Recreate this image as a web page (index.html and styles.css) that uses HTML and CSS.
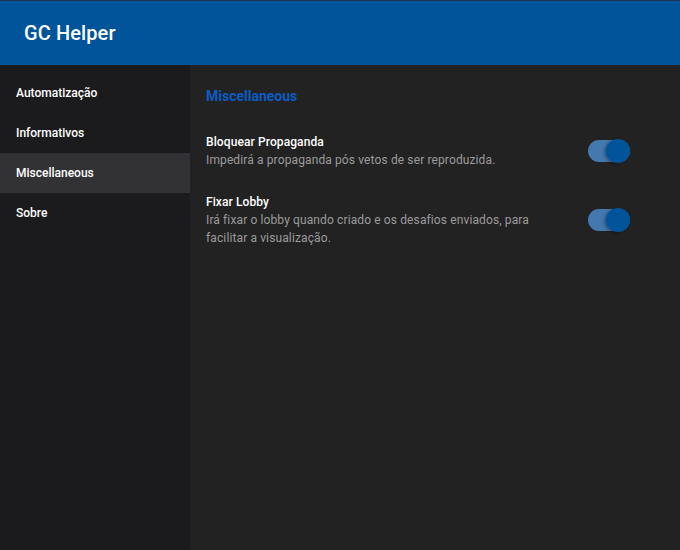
FILE: index.html
```html
<!DOCTYPE html>
<html lang="pt">
<head>
<meta charset="utf-8">
<title>GC Helper</title>
<link rel="stylesheet" href="styles.css">
</head>
<body>
<div class="app">
  <header class="topbar"><h1 class="title">GC Helper</h1></header>
  <div class="main">
    <nav class="sidebar">
      <div class="nav-item">Automatização</div>
      <div class="nav-item">Informativos</div>
      <div class="nav-item active">Miscellaneous</div>
      <div class="nav-item">Sobre</div>
    </nav>
    <section class="content">
      <h2 class="heading">Miscellaneous</h2>
      <div class="setting">
        <div class="text">
          <div class="name">Bloquear Propaganda</div>
          <div class="desc">Impedirá a propaganda pós vetos de ser reproduzida.</div>
        </div>
        <div class="toggle"><span class="thumb"></span></div>
      </div>
      <div class="setting">
        <div class="text">
          <div class="name">Fixar Lobby</div>
          <div class="desc">Irá fixar o lobby quando criado e os desafios enviados, para facilitar a visualização.</div>
        </div>
        <div class="toggle"><span class="thumb"></span></div>
      </div>
    </section>
  </div>
</div>
</body>
</html>
```
FILE: styles.css
```css
* { box-sizing: border-box; }
html, body { margin: 0; padding: 0; height: 100%; }
body { font-family: Roboto, "Noto Sans", sans-serif; background: #222222; color: #fff; }
.app { display: flex; flex-direction: column; height: 550px; }
.topbar {
  height: 65px; background: #00549a; border-top: 1px solid #1f3550;
  display: flex; align-items: center; padding-left: 24px; flex: none;
}
.title { margin: 0; font-size: 20px; font-weight: 500; color: #fff; letter-spacing: 0.1px; }
.main { flex: 1; display: flex; min-height: 0; }
.sidebar { width: 190px; background: #1b1b1d; padding-top: 8px; flex: none; }
.nav-item { height: 40px; display: flex; align-items: center; padding-left: 16px; font-size: 12px; font-weight: 500; color: #fff; }
.nav-item.active { background: #323234; }
.content { flex: 1; background: #222222; padding: 22px 50px 0 16px; }
.heading { margin: 0 0 28px; font-size: 14px; font-weight: 700; color: #0a5cc4; line-height: 18px; }
.setting { display: flex; align-items: center; justify-content: space-between; margin-bottom: 24px; }
.text { max-width: 340px; }
.name { font-size: 12px; font-weight: 500; color: #fff; line-height: 18px; letter-spacing: 0.1px; }
.desc { font-size: 12px; color: #9b9b9b; line-height: 18px; letter-spacing: 0.12px; }
.toggle { width: 42px; height: 22px; border-radius: 11px; background: #4479b0; position: relative; flex: none; }
.thumb {
  position: absolute; right: 0; top: -1px; width: 24px; height: 24px; border-radius: 50%;
  background: #00549a; box-shadow: -2px 1px 3px rgba(0,0,0,0.3);
}
```
